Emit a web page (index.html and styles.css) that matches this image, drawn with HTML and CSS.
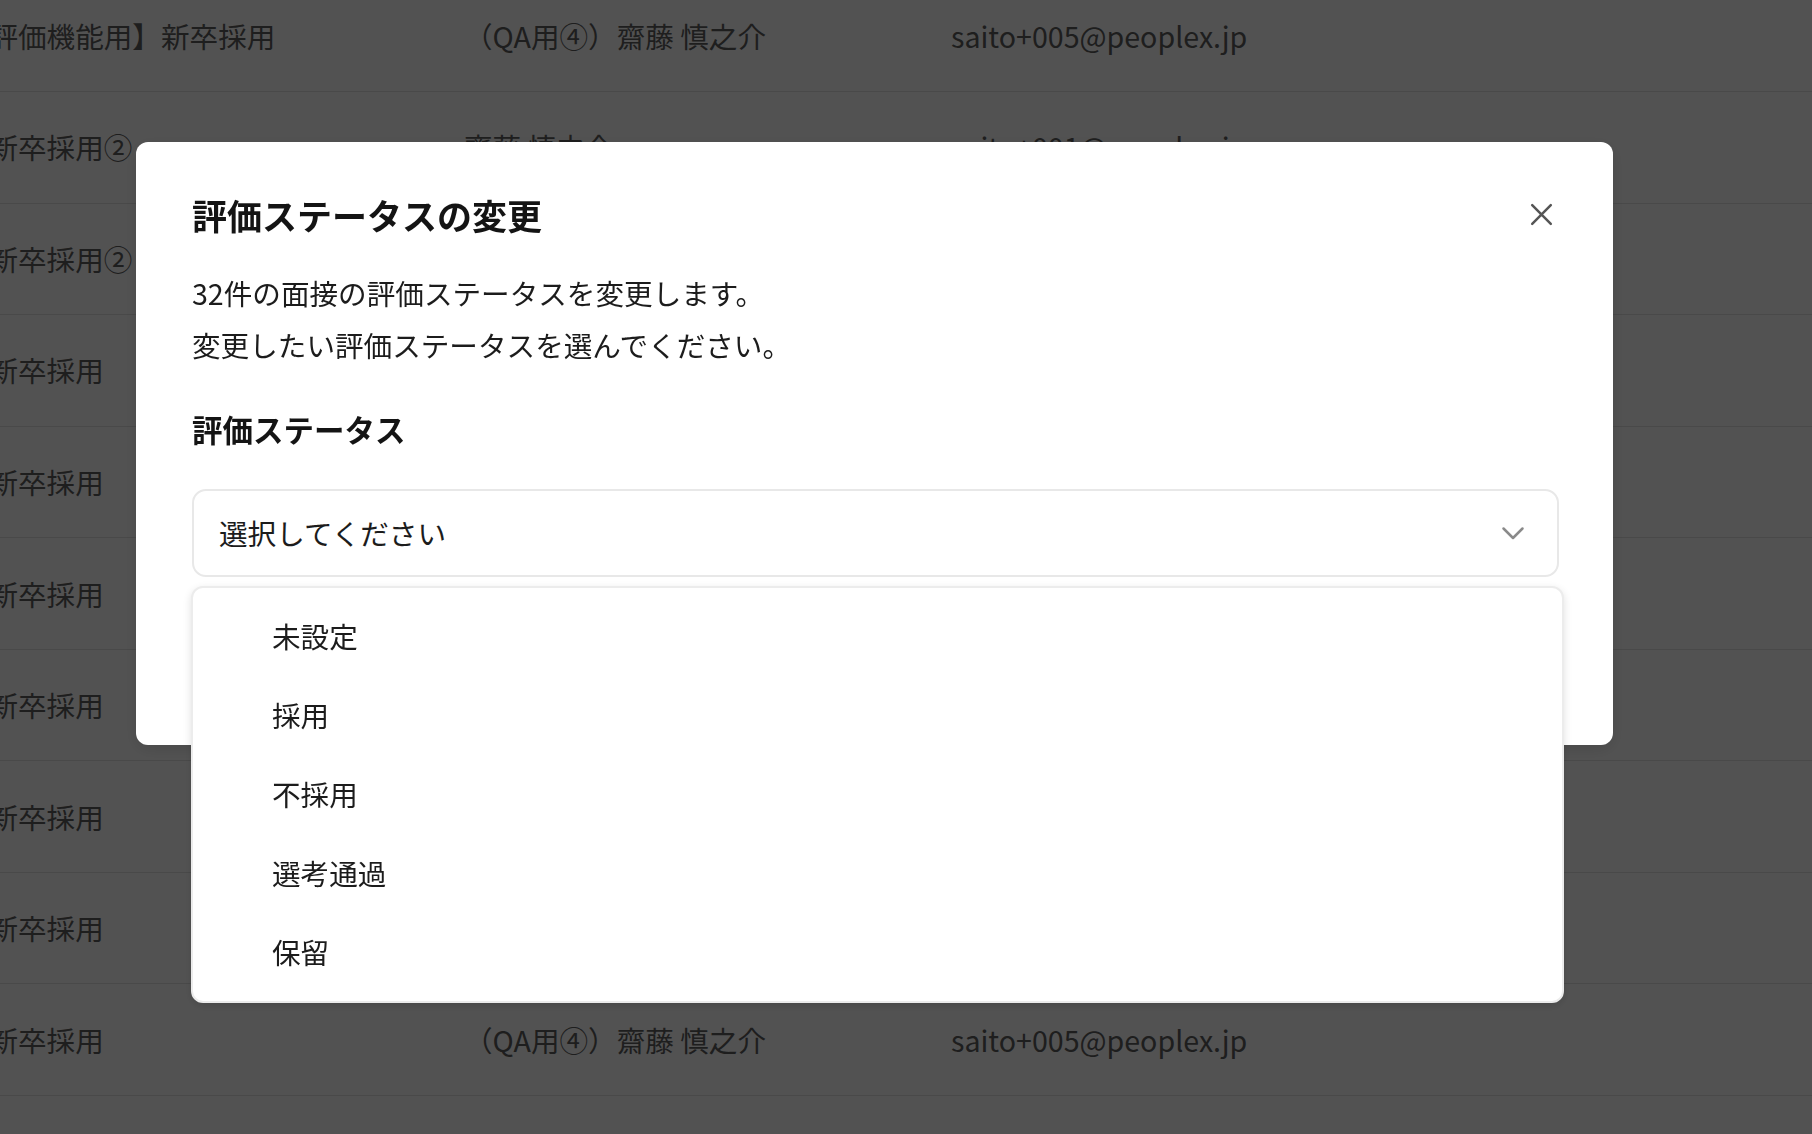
FILE: index.html
```html
<!DOCTYPE html>
<html lang="ja">
<head>
<meta charset="utf-8">
<title>評価ステータスの変更</title>
<link rel="stylesheet" href="styles.css">
</head>
<body>
<main class="page">
  <div class="list">
    <div class="row"><div class="cell c1">【テスト評価機能用】新卒採用</div><div class="cell c2">（QA用④）齋藤 慎之介</div><div class="cell c3">saito+005@peoplex.jp</div></div>
    <div class="row"><div class="cell c1">テスト用新卒採用②</div><div class="cell c2">齋藤 慎之介</div><div class="cell c3">saito+001@peoplex.jp</div></div>
    <div class="row"><div class="cell c1">テスト用新卒採用②</div><div class="cell c2">齋藤 慎之介</div><div class="cell c3">saito+001@peoplex.jp</div></div>
    <div class="row"><div class="cell c1">テスト用新卒採用</div><div class="cell c2">（QA用④）齋藤 慎之介</div><div class="cell c3">saito+005@peoplex.jp</div></div>
    <div class="row"><div class="cell c1">テスト用新卒採用</div><div class="cell c2">（QA用④）齋藤 慎之介</div><div class="cell c3">saito+005@peoplex.jp</div></div>
    <div class="row"><div class="cell c1">テスト用新卒採用</div><div class="cell c2">（QA用④）齋藤 慎之介</div><div class="cell c3">saito+005@peoplex.jp</div></div>
    <div class="row"><div class="cell c1">テスト用新卒採用</div><div class="cell c2">（QA用④）齋藤 慎之介</div><div class="cell c3">saito+005@peoplex.jp</div></div>
    <div class="row"><div class="cell c1">テスト用新卒採用</div><div class="cell c2">（QA用④）齋藤 慎之介</div><div class="cell c3">saito+005@peoplex.jp</div></div>
    <div class="row"><div class="cell c1">テスト用新卒採用</div><div class="cell c2">（QA用④）齋藤 慎之介</div><div class="cell c3">saito+005@peoplex.jp</div></div>
    <div class="row"><div class="cell c1">テスト用新卒採用</div><div class="cell c2">（QA用④）齋藤 慎之介</div><div class="cell c3">saito+005@peoplex.jp</div></div>
    <div class="row"><div class="cell c1">テスト用新卒採用</div><div class="cell c2">（QA用④）齋藤 慎之介</div><div class="cell c3">saito+005@peoplex.jp</div></div>
  </div>
</main>

<div class="overlay"></div>

<div class="modal" role="dialog" aria-labelledby="modal-title">
  <div class="modal-header">
    <h2 class="modal-title" id="modal-title">評価ステータスの変更</h2>
    <button class="close-btn" aria-label="閉じる">
      <svg width="31" height="31" viewBox="0 0 31 31" aria-hidden="true"><path d="M6.2 6.2 L24.8 24.8 M24.8 6.2 L6.2 24.8" fill="none" stroke="#555" stroke-width="2.5" stroke-linecap="round"/></svg>
    </button>
  </div>
  <p class="modal-desc">32件の面接の評価ステータスを変更します。<br>変更したい評価ステータスを選んでください。</p>
  <div class="field-label">評価ステータス</div>
  <div class="select-wrap">
    <div class="select">
      <span class="select-text">選択してください</span>
      <svg class="chevron" width="24" height="24" viewBox="0 0 24 24" aria-hidden="true"><path d="M2.5 7.5 L12 17 L21.5 7.5" fill="none" stroke="#8a8a8a" stroke-width="2.5" stroke-linecap="round" stroke-linejoin="round"/></svg>
    </div>
    <ul class="dropdown">
      <li class="option">未設定</li>
      <li class="option">採用</li>
      <li class="option">不採用</li>
      <li class="option">選考通過</li>
      <li class="option">保留</li>
    </ul>
  </div>
  <div class="modal-footer">
    <button class="btn btn-secondary">キャンセル</button>
    <button class="btn btn-primary">変更する</button>
  </div>
</div>
</body>
</html>
```

FILE: styles.css
```css
* { box-sizing: border-box; }

html, body {
  margin: 0;
  padding: 0;
  width: 1812px;
  height: 1134px;
  overflow: hidden;
  background: #ffffff;
  font-family: "Noto Sans CJK JP", "Noto Sans", sans-serif;
}

.page {
  width: 100%;
  height: 100%;
  overflow: hidden;
}

.list {
  margin-top: -19.5px;
  margin-left: -125px;
  display: flex;
  flex-direction: column;
}

.row {
  display: grid;
  grid-template-columns: 589px 487px 600px;
  align-items: center;
  height: 111.56px;
  border-bottom: 1px solid #e3e3e3;
  font-size: 28.6px;
  line-height: 42px;
  color: #5e5e5e;
}

.cell {
  white-space: nowrap;
  overflow: hidden;
}

.overlay {
  position: fixed;
  inset: 0;
  background: rgba(0, 0, 0, 0.68);
}

.modal {
  position: fixed;
  left: 136px;
  top: 142px;
  width: 1477px;
  background: #ffffff;
  border-radius: 12px;
  padding: 54.5px 54px 56px 56px;
  box-shadow: 0 4px 16px rgba(0, 0, 0, 0.12);
  color: #1c1c1c;
}

.modal-header {
  display: flex;
  align-items: center;
  justify-content: space-between;
}

.modal-title {
  margin: 0;
  font-size: 35px;
  line-height: 36px;
  font-weight: 700;
  color: #141414;
}

.close-btn {
  width: 31px;
  height: 31px;
  padding: 0;
  border: 0;
  background: transparent;
  display: flex;
  align-items: center;
  justify-content: center;
  margin-bottom: 1px;
  margin-right: 2px;
}

.modal-desc {
  margin: 34px 0 0 0;
  font-size: 28.6px;
  line-height: 52.5px;
  color: #1c1c1c;
}

.field-label {
  margin-top: 35px;
  font-size: 30.5px;
  line-height: 45px;
  font-weight: 700;
  color: #141414;
}

.select-wrap {
  position: relative;
  margin-top: 37px;
}

.select {
  height: 88.5px;
  border: 2px solid #e8e8e8;
  border-radius: 14px;
  background: #fff;
  display: flex;
  align-items: center;
  justify-content: space-between;
  padding: 0 32px 0 25px;
}

.select-text {
  font-size: 28.6px;
  line-height: 42px;
  color: #1c1c1c;
}

.chevron {
  display: block;
}

.dropdown {
  position: absolute;
  top: calc(100% + 9px);
  left: -1px;
  right: -4.5px;
  z-index: 2;
  margin: 0;
  padding: 8px 0 9px 0;
  list-style: none;
  background: #fff;
  border: 2px solid #ececec;
  border-radius: 12px;
  box-shadow: 0 3px 8px rgba(0, 0, 0, 0.12);
}

.option {
  height: 79.2px;
  display: flex;
  align-items: center;
  padding-left: 79px;
  font-size: 28.6px;
  line-height: 42px;
  color: #1c1c1c;
}

.modal-footer {
  margin-top: 55px;
  display: flex;
  justify-content: flex-end;
  gap: 20px;
}

.btn {
  height: 57px;
  padding: 0 36px;
  border-radius: 10px;
  font-family: inherit;
  font-size: 26px;
  font-weight: 700;
}

.btn-secondary {
  background: #fff;
  border: 2px solid #d0d0d0;
  color: #333;
}

.btn-primary {
  background: #2b7de9;
  border: 0;
  color: #fff;
}
```
